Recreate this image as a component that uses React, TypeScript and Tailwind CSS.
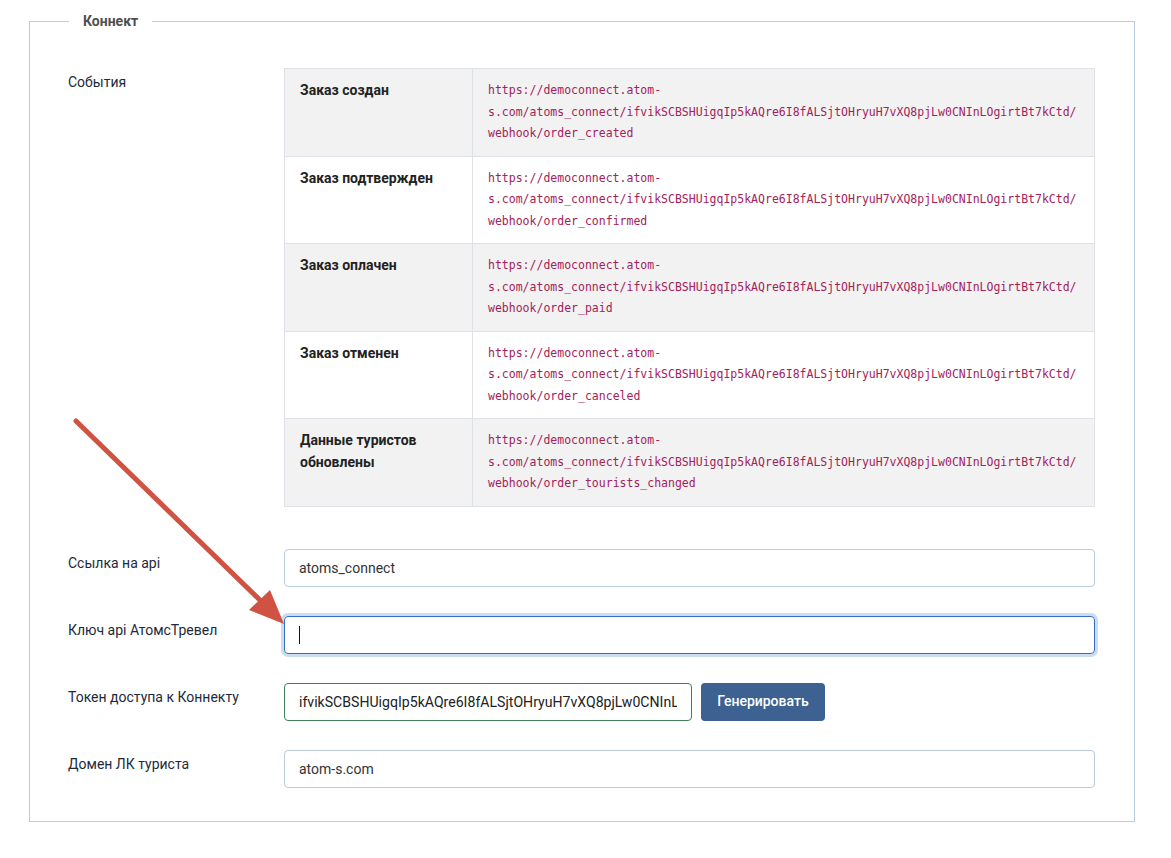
import React from 'react';

type Hook = { title: string; event: string };

const hooks: Hook[] = [
  { title: 'Заказ создан', event: 'order_created' },
  { title: 'Заказ подтвержден', event: 'order_confirmed' },
  { title: 'Заказ оплачен', event: 'order_paid' },
  { title: 'Заказ отменен', event: 'order_canceled' },
  { title: 'Данные туристов обновлены', event: 'order_tourists_changed' },
];

const TOKEN = 'ifvikSCBSHUigqIp5kAQre6I8fALSjtOHryuH7vXQ8pjLw0CNInLOgirtBt7kCtd';

const Label: React.FC<{ text: string }> = ({ text }) => (
  <div className="w-[216px] shrink-0 pt-[4px] text-[14px] leading-[20px] text-[#1d2a3a]">{text}</div>
);

const App: React.FC = () => {
  return (
    <div className="relative min-h-[858px] bg-white font-['Roboto',sans-serif]">
      <fieldset className="ml-[29px] mt-[12px] w-[1106px] border border-[#bccbe0] px-[38px] pb-[33px] pt-[38px]">
        <legend className="ml-[1px] px-[14px] text-[14px] font-bold leading-[18px] text-[#505050]">Коннект</legend>

        {/* Events */}
        <div className="flex">
          <Label text="События" />
          <table className="w-[811px] border-collapse">
            <tbody>
              {hooks.map((h, i) => (
                <tr key={h.event} className={i % 2 === 0 ? 'bg-[#f2f2f2]' : 'bg-white'}>
                  <td className="w-[188px] border border-[#dee2e6] px-[15px] py-[11px] align-top text-[14px] font-bold leading-[21.5px] text-[#222]">
                    {h.title}
                  </td>
                  <td className="border border-[#dee2e6] px-[15px] py-[11px] align-top font-['DejaVu_Sans_Mono',monospace] text-[11.5px] leading-[21.5px] text-[#a3225a]">
                    <div>https://democonnect.atom-</div>
                    <div>s.com/atoms_connect/{TOKEN}/</div>
                    <div>webhook/{h.event}</div>
                  </td>
                </tr>
              ))}
            </tbody>
          </table>
        </div>

        {/* Form */}
        <div className="mt-[42px] flex flex-col gap-[29px]">
          <div className="flex">
            <Label text="Ссылка на api" />
            <input
              readOnly
              value="atoms_connect"
              className="h-[38px] w-[811px] rounded-[4px] border border-[#bccbe0] px-[14px] text-[14px] text-[#333] outline-none"
            />
          </div>

          <div className="flex">
            <Label text="Ключ api АтомсТревел" />
            <div className="flex h-[38px] w-[811px] items-center rounded-[4px] border border-[#3470c0] px-[14px] shadow-[0_0_0_3px_#cddcf0]">
              <span className="h-[18px] w-px bg-[#111]" />
            </div>
          </div>

          <div className="flex">
            <Label text="Токен доступа к Коннекту" />
            <div className="flex gap-[9px]">
              <input
                readOnly
                value={TOKEN}
                className="h-[38px] w-[408px] rounded-[4px] border border-[#43805a] px-[14px] text-[14.1px] text-[#222] outline-none"
              />
              <button className="h-[38px] w-[124px] rounded-[4px] bg-[#3d6190] text-[14px] font-medium text-white">
                Генерировать
              </button>
            </div>
          </div>

          <div className="flex">
            <Label text="Домен ЛК туриста" />
            <input
              readOnly
              value="atom-s.com"
              className="h-[38px] w-[811px] rounded-[4px] border border-[#bccbe0] px-[14px] text-[14px] text-[#333] outline-none"
            />
          </div>
        </div>
      </fieldset>

      {/* annotation arrow */}
      <svg className="pointer-events-none absolute left-0 top-0" width="1171" height="858">
        <line x1="76" y1="409" x2="262" y2="590" stroke="#d05242" strokeWidth="5" strokeLinecap="round" />
        <polygon points="284,612 249,598 270,578" fill="#d05242" />
      </svg>
    </div>
  );
};

export default App;
